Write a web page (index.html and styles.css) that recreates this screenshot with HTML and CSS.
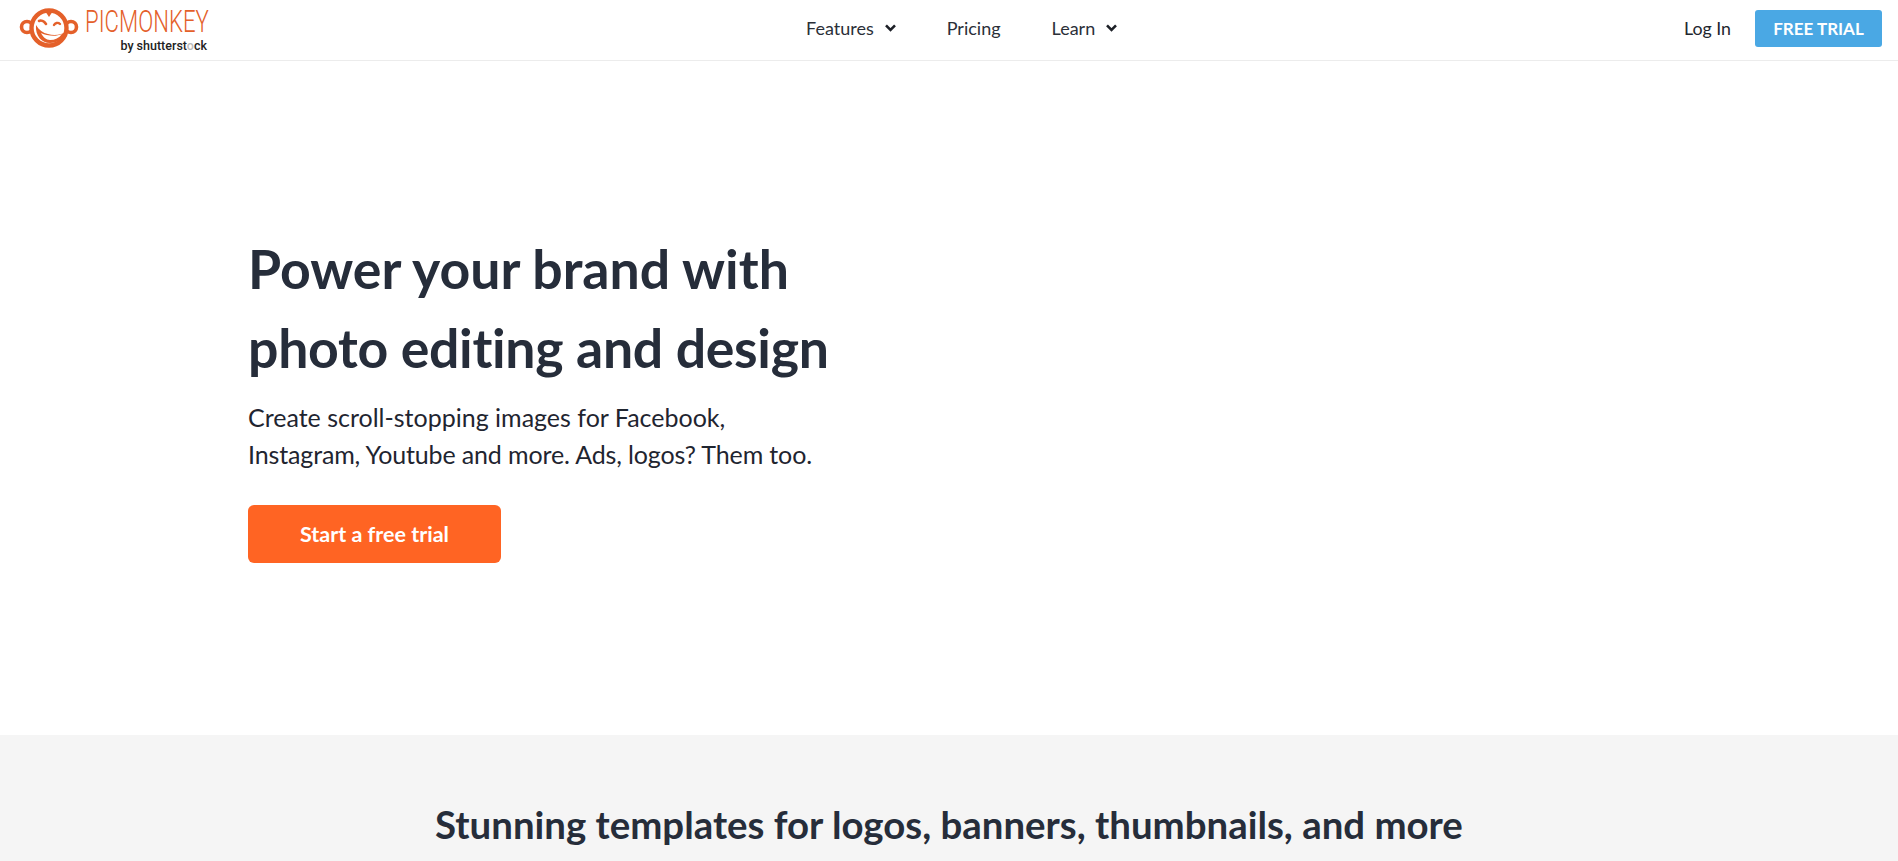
FILE: index.html
```html
<!DOCTYPE html>
<html lang="en">
<head>
<meta charset="utf-8">
<title>PicMonkey</title>
<link rel="stylesheet" href="styles.css">
</head>
<body>
<header class="topbar">
  <a class="logo" href="#">
    <svg class="logo-mark" viewBox="0 0 60 40" width="60" height="40" aria-hidden="true">
      <circle cx="8" cy="19" r="5.5" fill="#fff" stroke="#e4602a" stroke-width="3.6"/>
      <circle cx="52" cy="19" r="5.5" fill="#fff" stroke="#e4602a" stroke-width="3.6"/>
      <ellipse cx="30" cy="20" rx="17.5" ry="17.5" fill="#fff" stroke="#e4602a" stroke-width="4.4"/>
      <path d="M26 3l4 6 4-6z" fill="#e4602a"/>
      <path d="M20 13c2-1 5 0 7 3" fill="none" stroke="#e4602a" stroke-width="2.6" stroke-linecap="round"/>
      <path d="M35 17c1-2 4-3 6-1" fill="none" stroke="#e4602a" stroke-width="2.4" stroke-linecap="round"/>
      <path d="M17 17c-1 11 6 18 14 18 8 0 15-5 17-12-5 4-13 5-19 3-5-1-9-4-12-9z" fill="#e4602a"/>
      <path d="M22 25c6 3 15 4 21 1-3 4-7 6-12 6-4 0-7-3-9-7z" fill="#fff"/>
    </svg>
    <span class="logo-text">
      <span class="logo-name">PICMONKEY</span>
      <span class="logo-by">by shutterst<span class="logo-fade">o</span>ck</span>
    </span>
  </a>
  <nav class="nav">
    <a class="nav-item" href="#">Features
      <svg class="chev" viewBox="0 0 11 8" width="11" height="8" aria-hidden="true"><path d="M1 1.3l4.5 4.5L10 1.3" fill="none" stroke="#1d2027" stroke-width="2.6"/></svg>
    </a>
    <a class="nav-item" href="#">Pricing</a>
    <a class="nav-item" href="#">Learn
      <svg class="chev" viewBox="0 0 11 8" width="11" height="8" aria-hidden="true"><path d="M1 1.3l4.5 4.5L10 1.3" fill="none" stroke="#1d2027" stroke-width="2.6"/></svg>
    </a>
  </nav>
  <div class="actions">
    <a class="login" href="#">Log In</a>
    <a class="trial" href="#">FREE TRIAL</a>
  </div>
</header>
<section class="hero">
  <h1><span class="line">Power your brand with</span><span class="line line-tight">photo editing and design</span></h1>
  <p><span class="line">Create scroll-stopping images for Facebook,</span><span class="line line-snug">Instagram, Youtube and more. Ads, logos? Them too.</span></p>
  <a class="cta" href="#">Start a free trial</a>
</section>
<section class="templates">
  <h2>Stunning templates for logos, banners, thumbnails, and more</h2>
</section>
</body>
</html>
```
FILE: styles.css
```css
* { box-sizing: border-box; }
html, body { margin: 0; height: 861px; overflow: hidden; }
body { font-family: Lato, "Noto Sans", sans-serif; background: #fff; color: #1f2530; font-variant-ligatures: none; }
a { text-decoration: none; color: inherit; }

.topbar {
  height: 61px;
  border-bottom: 1px solid #ececec;
  display: grid;
  grid-template-columns: 787px auto 1fr;
  align-items: center;
  padding: 0 16px 3px 19px;
}
.logo { display: flex; align-items: flex-start; gap: 6px; align-self: start; padding-top: 8px; }
.logo-text { display: flex; flex-direction: column; align-items: flex-end; width: 122px; padding-top: 1px; }
.logo-name { align-self: flex-start; font-family: Roboto, sans-serif; font-size: 31px; font-weight: 300; line-height: 26px; color: #e4602a; transform: scaleX(.715); transform-origin: left; white-space: nowrap; }
.logo-by { font-family: Roboto, sans-serif; font-size: 12.5px; font-weight: 500; line-height: 14px; margin-top: 4px; color: #222; white-space: nowrap; }
.logo-fade { color: #bbb; }

.nav { display: flex; gap: 51px; font-size: 18px; line-height: 20px; color: #2b2f38; margin-top: -2px; }
.nav-item { display: flex; align-items: center; gap: 11px; }

.actions { display: flex; justify-content: flex-end; align-items: center; gap: 24px; font-size: 17.8px; }
.login { color: #22262e; margin-top: -2px; }
.trial {
  width: 127px; height: 37px;
  background: #4aa8e4; color: #fff; border-radius: 3px;
  font-weight: 700; font-size: 17px;
  display: flex; align-items: center; justify-content: center;
}

.hero { height: 674px; padding: 168px 0 0 248px; }
.line { display: block; }
.line-tight { letter-spacing: -.3px; }
.line-snug { letter-spacing: -.14px; }
h1 { margin: 0; font-size: 53.6px; font-weight: 700; line-height: 79px; color: #262d3a; }
.hero p { margin: 12px 0 0; font-size: 25px; line-height: 37px; color: #1f2530; }
.cta {
  display: flex; align-items: center; justify-content: center;
  width: 253px; height: 58px; margin-top: 32px;
  background: #ff6423; color: #fff; border-radius: 6px;
  font-size: 21.5px; font-weight: 700;
}

.templates { height: 126px; background: #f5f5f5; padding-top: 66px; }
h2 { margin: 0; text-align: center; font-size: 38.4px; font-weight: 700; line-height: 46px; color: #262d3a; }
```
